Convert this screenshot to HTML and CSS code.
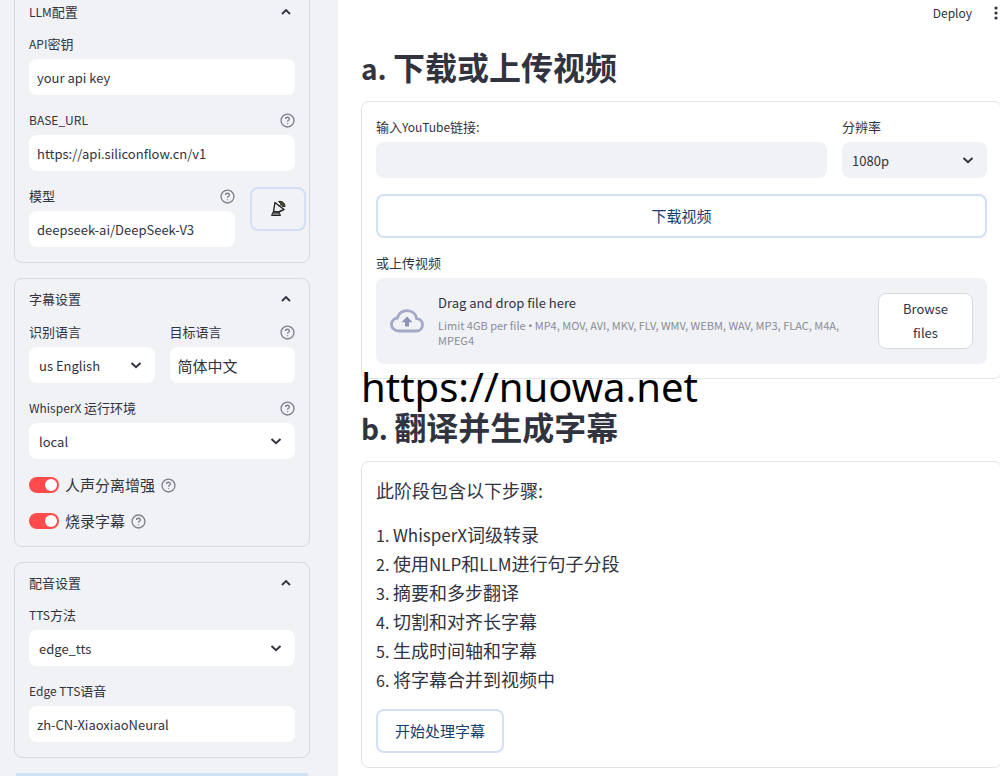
FILE: index.html
```html
<!DOCTYPE html>
<html lang="zh-CN">
<head>
    <meta charset="UTF-8">
    <meta name="viewport" content="width=device-width, initial-scale=1.0">
    <title>VideoLingo</title>
    <link rel="stylesheet" href="styles.css">
</head>
<body>
    <!-- Shared icons -->
    <svg class="hidden">
        <symbol id="help" viewBox="0 0 16 16">
            <circle cx="8" cy="8" r="6.9"/>
            <path d="M6 6.4C6 5.2 6.9 4.5 8 4.5s2 .8 2 1.8c0 1.4-2 1.6-2 3"/>
            <path d="M8 11v1"/>
        </symbol>
        <symbol id="up" viewBox="0 0 12 12"><path d="M2 8l4-4 4 4"/></symbol>
        <symbol id="down" viewBox="0 0 12 12"><path d="M1.5 4L6 8.2 10.5 4"/></symbol>
    </svg>

    <div class="app">
        <aside class="sidebar">
            <!-- LLM settings -->
            <section class="card">
                <h2 class="card-title"><span><span class="en">LLM</span>配置</span><svg class="chevron"><use href="#up"/></svg></h2>
                <div class="field">
                    <label for="api_key"><span class="en">API</span>密钥</label>
                    <input type="text" id="api_key" value="your api key">
                </div>
                <div class="field">
                    <div class="label-row">
                        <label for="base_url"><span class="en">BASE_URL</span></label>
                        <svg class="help"><use href="#help"/></svg>
                    </div>
                    <input type="text" id="base_url" value="https://api.siliconflow.cn/v1">
                </div>
                <div class="model-row">
                    <div class="field">
                        <div class="label-row">
                            <label for="model">模型</label>
                            <svg class="help"><use href="#help"/></svg>
                        </div>
                        <input type="text" id="model" value="deepseek-ai/DeepSeek-V3">
                    </div>
                    <button class="btn test-btn" type="button" aria-label="API">
                        <svg class="dish" viewBox="0 0 18 18">
                            <path d="M2.500 15.500l1.500-3.500h6l1.500 3.500z" fill="#777" stroke="#222"/>
                            <path d="M6 2.500L4.500 11.500l5 .5 5.500-2.500z" fill="#eee" stroke="#222" stroke-width="1.400" stroke-linejoin="round"/>
                            <path d="M10 6.500l2.500-2.500" stroke="#222"/>
                            <path d="M9.500 1.500c3.500-.8 6.500 1.500 6.500 5H13.500L12 4z" fill="#4d5018" stroke="#222"/>
                        </svg>
                    </button>
                </div>
            </section>

            <!-- Subtitle settings -->
            <section class="card">
                <h2 class="card-title"><span>字幕设置</span><svg class="chevron"><use href="#up"/></svg></h2>
                <div class="two-cols">
                    <div class="field">
                        <label for="src_lang">识别语言</label>
                        <div class="select">
                            <select id="src_lang"><option>us English</option></select>
                            <svg class="chevron"><use href="#down"/></svg>
                        </div>
                    </div>
                    <div class="field">
                        <div class="label-row">
                            <label for="target_lang">目标语言</label>
                            <svg class="help"><use href="#help"/></svg>
                        </div>
                        <input class="zh" type="text" id="target_lang" value="简体中文">
                    </div>
                </div>
                <div class="field">
                    <div class="label-row">
                        <label for="runtime"><span class="en">WhisperX </span>运行环境</label>
                        <svg class="help"><use href="#help"/></svg>
                    </div>
                    <div class="select">
                        <select id="runtime"><option>local</option></select>
                        <svg class="chevron"><use href="#down"/></svg>
                    </div>
                </div>
                <div class="toggle-row">
                    <input type="checkbox" class="toggle" id="demucs" checked>
                    <label for="demucs">人声分离增强</label>
                    <svg class="help"><use href="#help"/></svg>
                </div>
                <div class="toggle-row">
                    <input type="checkbox" class="toggle" id="burn" checked>
                    <label for="burn">烧录字幕</label>
                    <svg class="help"><use href="#help"/></svg>
                </div>
            </section>

            <!-- Dubbing settings -->
            <section class="card">
                <h2 class="card-title"><span>配音设置</span><svg class="chevron"><use href="#up"/></svg></h2>
                <div class="field">
                    <label for="tts"><span class="en">TTS</span>方法</label>
                    <div class="select">
                        <select id="tts"><option>edge_tts</option></select>
                        <svg class="chevron"><use href="#down"/></svg>
                    </div>
                </div>
                <div class="field">
                    <label for="voice"><span class="en">Edge TTS</span>语音</label>
                    <input type="text" id="voice" value="zh-CN-XiaoxiaoNeural">
                </div>
            </section>
            <div class="banner"></div>
        </aside>

        <main class="main">
            <header class="toolbar">
                <button class="deploy" type="button">Deploy</button>
                <svg class="dots" viewBox="0 0 4 14"><circle cx="2" cy="2" r="1.6"/><circle cx="2" cy="7" r="1.6"/><circle cx="2" cy="12" r="1.6"/></svg>
            </header>

            <h1><span class="en">a. </span>下载或上传视频</h1>
            <section class="card">
                <div class="download-row">
                    <div class="field">
                        <label for="url">输入<span class="en">YouTube</span>链接:</label>
                        <input type="text" id="url">
                    </div>
                    <div class="field">
                        <label for="res">分辨率</label>
                        <div class="select">
                            <select id="res"><option>1080p</option></select>
                            <svg class="chevron"><use href="#down"/></svg>
                        </div>
                    </div>
                </div>
                <button class="btn" type="button">下载视频</button>
                <div class="field">
                    <span class="caption">或上传视频</span>
                    <div class="dropzone">
                        <svg class="cloud" viewBox="0 0 34 24">
                            <path d="M9 22C4.500 22 1.500 19 1.500 15.500c0-3.300 2.300-6 5.800-6.500C8.800 4.500 12.500 1.700 17 1.700c5 0 8.800 3.300 9.700 8 3.500.3 5.800 2.700 5.800 6 0 3.500-2.700 6.300-6.500 6.300z" fill="none" stroke="#a3a8c9" stroke-width="2.800"/>
                            <path d="M17 7.500l5.500 5.800h-3.500v4.200h-4v-4.200h-3.500z" fill="#8d93bb"/>
                        </svg>
                        <div class="drop-text">
                            <div class="drop-title">Drag and drop file here</div>
                            <div class="drop-hint">Limit 4GB per file <span class="bullet">•</span> MP4, MOV, AVI, MKV, FLV, WMV, WEBM, WAV, MP3, FLAC, M4A, MPEG4</div>
                        </div>
                        <button class="browse" type="button">Browse files</button>
                    </div>
                </div>
            </section>

            <div class="site"><span class="site-url">https://nuowa.net</span></div>

            <h1><span class="en">b. </span>翻译并生成字幕</h1>
            <section class="card steps">
                <p>此阶段包含以下步骤:</p>
                <ol>
                    <li><span class="en">WhisperX</span>词级转录</li>
                    <li>使用<span class="en">NLP</span>和<span class="en">LLM</span>进行句子分段</li>
                    <li>摘要和多步翻译</li>
                    <li>切割和对齐长字幕</li>
                    <li>生成时间轴和字幕</li>
                    <li>将字幕合并到视频中</li>
                </ol>
                <button class="btn start" type="button">开始处理字幕</button>
            </section>
        </main>
    </div>
</body>
</html>
```
FILE: styles.css
```css
* {
    box-sizing: border-box;
}

body {
    margin: 0;
    background-color: #fff;
    color: #31333f;
    font-family: "Noto Sans CJK SC", sans-serif;
    font-size: 13px;
    line-height: 18px;
}

button, input, select {
    font-family: inherit;
    color: inherit;
    margin: 0;
}

.hidden {
    position: absolute;
    width: 0;
    height: 0;
}

/* Latin letters run larger than the Chinese ones in this family */
.en {
    font-size: 12px;
    line-height: 1;
}

.app {
    display: flex;
    height: 100vh;
    overflow: hidden;
}

/* Sidebar */
.sidebar {
    flex: none;
    width: 338px;
    padding: 0 28px 0 14px;
    background-color: #f0f2f6;
}

.sidebar .card {
    margin-bottom: 15px;
    padding: 0 14px 15px;
}

/* the panel is scrolled a little past its first card's top */
.sidebar .card:first-child {
    margin-top: -9px;
}

.card {
    display: flex;
    flex-direction: column;
    gap: 16px;
    border: 1px solid #d6d9e0;
    border-radius: 8px;
}

.card-title {
    display: flex;
    align-items: center;
    justify-content: space-between;
    height: 40px;
    margin: 0 0 -13px;
    padding-right: 3px;
    font-size: 13px;
    font-weight: 400;
}

.chevron {
    width: 12px;
    height: 12px;
    fill: none;
    stroke: #31333f;
    stroke-width: 1.8;
}

.help {
    flex: none;
    width: 15px;
    height: 15px;
    fill: none;
    stroke: #7d808b;
    stroke-width: 1.4;
}

.field {
    display: flex;
    flex-direction: column;
    gap: 6px;
    min-width: 0;
}

.label-row {
    display: flex;
    align-items: center;
    justify-content: space-between;
    height: 18px;
}

.field label, .caption {
    height: 18px;
}

input[type="text"], select {
    width: 100%;
    height: 36px;
    border: none;
    border-radius: 8px;
    background-color: #fff;
    font-size: 13px;
}

input[type="text"] {
    padding: 0 8px;
}

input.zh {
    font-size: 15px;
}

select {
    padding: 0 10px;
    appearance: none;
}

.select {
    position: relative;
}

.select .chevron {
    position: absolute;
    top: 12px;
    right: 13px;
    stroke-width: 2;
    pointer-events: none;
}

.model-row {
    display: grid;
    grid-template-columns: 1fr 45px;
    gap: 15px;
}

.two-cols {
    display: grid;
    grid-template-columns: 1fr 1fr;
    gap: 15px;
    margin-top: 1px;
}

.toggle-row {
    display: flex;
    align-items: center;
    gap: 6px;
    height: 20px;
    font-size: 15px;
}

.toggle {
    appearance: none;
    display: flex;
    justify-content: flex-end;
    width: 30px;
    height: 16px;
    padding: 2px;
    border-radius: 8px;
    background-color: #ff4b4b;
}

.toggle::before {
    content: "";
    width: 12px;
    height: 12px;
    border-radius: 50%;
    background-color: #fff;
}

.btn {
    height: 44px;
    padding: 0 17px 2px;
    border: 2px solid #d2dff5;
    border-radius: 8px;
    background-color: #fff;
    color: #144070;
    font-size: 15px;
}

.test-btn {
    width: 56px;
    padding: 0;
    background-color: transparent;
}

.dish {
    display: block;
    width: 18px;
    height: 18px;
    margin: 0 auto;
}

.banner {
    height: 44px;
    margin: 0 2px;
    background-color: #cfe2f3;
}

/* Main area */
.main {
    flex: 1;
    min-width: 0;
    margin-right: -2px;
    padding-left: 23px;
}

.toolbar {
    display: flex;
    align-items: center;
    justify-content: flex-end;
    gap: 22px;
    height: 26px;
    margin-bottom: 20px;
    padding-right: 4px;
}

.deploy {
    padding: 0 0 2px;
    border: none;
    background: none;
    font-size: 12px;
}

.dots {
    width: 4px;
    height: 14px;
    fill: #31333f;
}

h1 {
    margin: 0;
    padding-bottom: 15px;
    font-size: 32px;
    line-height: 40px;
    font-weight: 700;
}

h1 .en {
    font-size: 28px;
}

.main .card {
    padding: 16px 14px 14px;
    border-color: #e0e2e6;
}

.main input[type="text"], .main select {
    background-color: #f0f2f6;
}

.download-row {
    display: grid;
    grid-template-columns: 28fr 9fr;
    gap: 15px;
}

.dropzone {
    display: flex;
    align-items: center;
    gap: 14px;
    padding: 15px 14px;
    border-radius: 8px;
    background-color: #f0f2f6;
}

.cloud {
    flex: none;
    width: 34px;
    height: 24px;
}

.drop-text {
    flex: 1;
}

.drop-title {
    margin-bottom: 6px;
}

.drop-hint {
    color: #8a8c95;
    font-size: 11px;
    line-height: 15px;
}

.bullet {
    font-family: "Noto Sans", sans-serif;
    line-height: 1;
}

.browse {
    flex: none;
    width: 95px;
    padding: 3px 20px;
    border: 1px solid #d6d9e0;
    border-radius: 8px;
    background-color: #fff;
    font-size: 13px;
    line-height: 24px;
}

/* Site address lies over the gap between the two cards */
.site {
    position: relative;
    height: 27px;
}

.site-url {
    position: absolute;
    top: -20px;
    left: 0;
    color: #000;
    font-family: "Noto Sans", sans-serif;
    font-size: 40px;
    line-height: 56px;
}

.main .steps {
    gap: 15px;
    padding-top: 14px;
    font-size: 18px;
    line-height: 29px;
}

.steps p {
    margin: 0;
}

.steps ol {
    margin: 0;
    padding: 0;
    list-style: none;
    counter-reset: step;
}

.steps li {
    counter-increment: step;
}

.steps li::before {
    content: counter(step) ". ";
    font-size: 16px;
    line-height: 1;
}

.steps .en {
    font-size: 17px;
}

.start {
    align-self: flex-start;
}
```
